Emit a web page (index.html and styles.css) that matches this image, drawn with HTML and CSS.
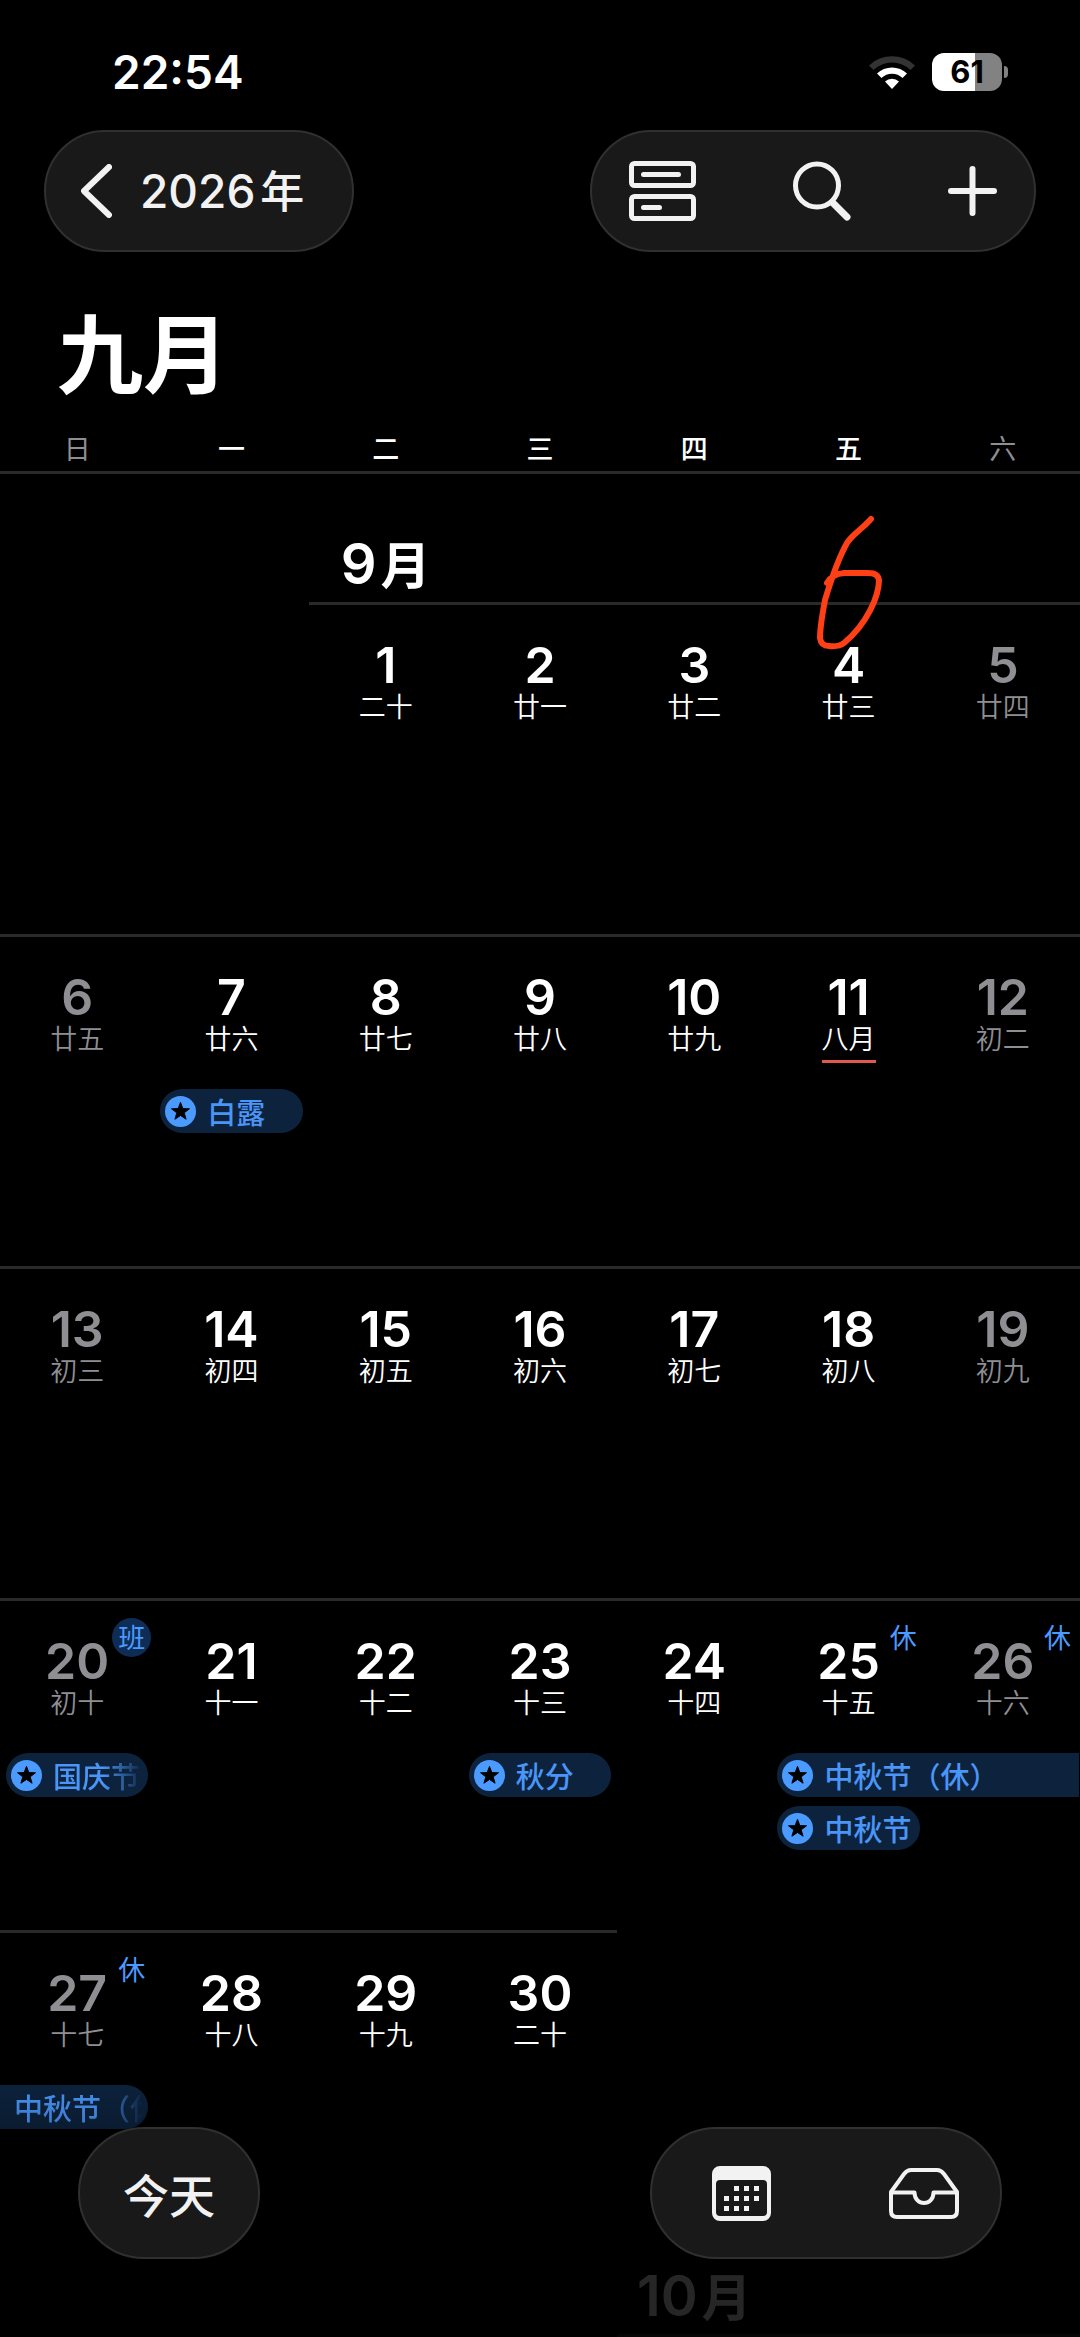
FILE: index.html
```html
<!DOCTYPE html>
<html lang="zh-CN">
	<head>
		<meta charset="utf-8">
		<meta name="viewport" content="width=device-width, initial-scale=1">
		<title>日历</title>
		<link rel="stylesheet" href="styles.css">
	</head>
	<body>
		<!-- 星形图标，事件里重复使用 -->
		<svg class="defs" aria-hidden="true">
			<symbol id="star" viewBox="0 0 32 32">
				<circle cx="16" cy="16" r="16" fill="#4a9aff"/>
				<path d="M16 6.5l2.4 6.5 6.9.2-5.5 4.2 2 6.6-5.8-3.9-5.8 3.9 2-6.6-5.5-4.2 6.9-.2z" fill="#000" stroke="#000" stroke-linejoin="round"/>
			</symbol>
		</svg>

		<header>
			<div class="status">
				<span class="time">22:54</span>
				<div class="status-icons">
					<svg width="46" height="34" viewBox="0 0 46 34">
						<path d="M0 10.500A33 33 0 0 1 46 10.500L41.500 15A26.500 26.500 0 0 0 4.500 15z" fill="#333"/>
						<path d="M8 18.500A21.500 21.500 0 0 1 38 18.500L33.500 23A15 15 0 0 0 12.500 23z" fill="#fff"/>
						<path d="M16 26.500A10 10 0 0 1 30 26.500L23 34z" fill="#fff"/>
					</svg>
					<div class="battery"><span class="level">61</span><i class="cap"></i></div>
				</div>
			</div>
			<nav class="nav">
				<button class="pill back">
					<svg width="31" height="54" viewBox="0 0 31 54"><path d="M28 3L3 27l25 24" fill="none" stroke="#f2f2f2" stroke-width="6" stroke-linecap="round" stroke-linejoin="round"/></svg>
					<span class="year">2026<span class="unit">年</span></span>
				</button>
				<div class="pill tools">
					<button aria-label="列表">
						<svg width="67" height="60" viewBox="0 0 67 60" fill="none" stroke="#f2f2f2" stroke-width="5" stroke-linecap="round">
							<rect x="2.500" y="2.500" width="62" height="22" rx="3"/>
							<rect x="2.500" y="35.500" width="62" height="22" rx="3"/>
							<path d="M14.500 13.500h35M14.500 46.500h16"/>
						</svg>
					</button>
					<button aria-label="搜索">
						<svg width="58" height="60" viewBox="0 0 58 60" fill="none" stroke="#f2f2f2" stroke-linecap="round">
							<circle cx="24" cy="24.500" r="21.500" stroke-width="5"/>
							<path d="M39.500 41.500L54 56" stroke-width="7"/>
						</svg>
					</button>
					<button aria-label="新建">
						<svg width="49" height="50" viewBox="0 0 49 50"><path d="M24.500 3v44M3 25h43" stroke="#f2f2f2" stroke-width="6" stroke-linecap="round"/></svg>
					</button>
				</div>
			</nav>
			<h1>九月</h1>
			<div class="weekdays">
				<span class="off">日</span><span>一</span><span>二</span><span>三</span><span>四</span><span>五</span><span class="off">六</span>
			</div>
		</header>

		<main>
			<div class="month first">
				<h2 class="c3">9<span class="unit">月</span></h2>
				<svg class="mark" viewBox="0 0 154 180"><path d="M100 45C88 58 82 60 76 69C67 85 60 106 54 126C51 142 49 153 49 164Q50 172 58 172Q68 173 73 169C96 150 108 122 108 106Q107 98 94 99H73Q61 100 56 109" fill="none" stroke="#ff3f16" stroke-width="6" stroke-linecap="round" stroke-linejoin="round"/></svg>
			</div>

			<div class="week">
				<hr class="from3">
				<button class="day c3"><b>1</b><span>二十</span></button>
				<button class="day c4"><b>2</b><span>廿一</span></button>
				<button class="day c5"><b>3</b><span>廿二</span></button>
				<button class="day c6"><b>4</b><span>廿三</span></button>
				<button class="day c7 off"><b>5</b><span>廿四</span></button>
			</div>

			<div class="week">
				<hr>
				<button class="day off"><b>6</b><span>廿五</span></button>
				<button class="day"><b>7</b><span>廿六</span></button>
				<button class="day"><b>8</b><span>廿七</span></button>
				<button class="day"><b>9</b><span>廿八</span></button>
				<button class="day"><b>10</b><span>廿九</span></button>
				<button class="day"><b>11</b><span class="newmonth">八月</span></button>
				<button class="day off"><b>12</b><span>初二</span></button>
				<div class="event c2"><svg><use href="#star"/></svg><span>白露</span></div>
			</div>

			<div class="week">
				<hr>
				<button class="day off"><b>13</b><span>初三</span></button>
				<button class="day"><b>14</b><span>初四</span></button>
				<button class="day"><b>15</b><span>初五</span></button>
				<button class="day"><b>16</b><span>初六</span></button>
				<button class="day"><b>17</b><span>初七</span></button>
				<button class="day"><b>18</b><span>初八</span></button>
				<button class="day off"><b>19</b><span>初九</span></button>
			</div>

			<div class="week">
				<hr>
				<button class="day off"><b>20</b><span>初十</span><em class="badge work">班</em></button>
				<button class="day"><b>21</b><span>十一</span></button>
				<button class="day"><b>22</b><span>十二</span></button>
				<button class="day"><b>23</b><span>十三</span></button>
				<button class="day"><b>24</b><span>十四</span></button>
				<button class="day"><b>25</b><span>十五</span><em class="badge">休</em></button>
				<button class="day off"><b>26</b><span>十六</span><em class="badge">休</em></button>
				<div class="event c1 cut"><svg><use href="#star"/></svg><span>国庆节</span></div>
				<div class="event c4"><svg><use href="#star"/></svg><span>秋分</span></div>
				<div class="event c6 to-next"><svg><use href="#star"/></svg><span>中秋节（休）</span></div>
				<div class="event c6 second"><svg><use href="#star"/></svg><span>中秋节</span></div>
			</div>

			<div class="week">
				<hr class="to4">
				<button class="day off"><b>27</b><span>十七</span><em class="badge">休</em></button>
				<button class="day"><b>28</b><span>十八</span></button>
				<button class="day"><b>29</b><span>十九</span></button>
				<button class="day"><b>30</b><span>二十</span></button>
				<div class="event c1 from-prev cut"><span>中秋节（休）</span></div>
			</div>

			<div class="month">
				<h2 class="c5">10<span class="unit">月</span></h2>
			</div>
			<div class="next"><hr class="from5"></div>
		</main>

		<div class="fade"></div>
		<footer class="toolbar">
			<button class="pill today">今天</button>
			<div class="pill tabs">
				<button aria-label="日历">
					<svg width="59" height="55" viewBox="0 0 59 55">
						<path fill="#f2f2f2" fill-rule="evenodd" d="M8 0h43a8 8 0 0 1 8 8v39a8 8 0 0 1-8 8H8a8 8 0 0 1-8-8V8a8 8 0 0 1 8-8zM8 14a4 4 0 0 0-4 4v28a4 4 0 0 0 4 4h43a4 4 0 0 0 4-4V18a4 4 0 0 0-4-4z"/>
						<path stroke="#f2f2f2" stroke-width="5" stroke-dasharray="5 5" d="M22 22.500h25M12 32.500h35M12 42.500h25"/>
					</svg>
				</button>
				<button aria-label="收件箱">
					<svg width="70" height="51" viewBox="0 0 70 51" fill="none" stroke="#f2f2f2" stroke-width="4" stroke-linejoin="round">
						<path d="M2 24L15 6Q18 2 22 2h26Q52 2 55 6L68 24V43q0 6-6 6H8q-6 0-6-6z"/>
						<path d="M2 24.500h23.500c0 14 19 14 19 0H68"/>
					</svg>
				</button>
			</div>
		</footer>
	</body>
</html>
```
FILE: styles.css
```css
*{
	margin: 0;
	padding: 0;
	box-sizing: border-box;
}
body{
	background: #000;
	color: #fff;
	font-family: Inter, "Noto Sans CJK SC", sans-serif;
}
button{
	background: none;
	border: none;
	color: inherit;
	font: inherit;
	cursor: pointer;
}
svg{
	display: block;
	flex: none;
}
.defs{
	position: absolute;
	width: 0;
	height: 0;
}

/* 状态栏 */
.status{
	display: flex;
	justify-content: space-between;
	align-items: center;
	height: 130px;
	padding: 13px 72px 0 112px;
}
.time{
	font-size: 46px;
	font-weight: 600;
}
.status-icons{
	display: flex;
	align-items: center;
	gap: 17px;
}
.battery{
	display: flex;
	align-items: center;
	gap: 2px;
}
.level{
	width: 70px;
	line-height: 38px;
	border-radius: 12px;
	background: linear-gradient(to right, #fff 61%, #828282 61%);
	color: #000;
	font-size: 31px;
	font-weight: 700;
	text-align: center;
}
.cap{
	width: 4px;
	height: 12px;
	border-radius: 0 6px 6px 0;
	background: #828282;
}

/* 顶部导航 */
.pill{
	display: flex;
	align-items: center;
	border: 2px solid #303030;
	border-radius: 66px;
	background: #191919;
	color: #f2f2f2;
}
.nav{
	display: flex;
	justify-content: space-between;
	padding: 0 44px;
}
.nav .pill{
	height: 122px;
}
.back{
	gap: 28px;
	padding: 0 48px 0 35px;
}
.year{
	font-size: 46px;
	font-weight: 500;
	line-height: 60px;
}
.unit{
	line-height: 1;
}
.year .unit{
	margin-left: 5px;
	font-size: 44px;
}
.tools{
	gap: 97px;
	padding: 0 37px;
}
h1{
	margin-top: 48px;
	padding-left: 57px;
	font-family: "Noto Sans CJK SC", sans-serif;
	font-size: 86px;
	font-weight: 700;
	line-height: 100px;
}
.weekdays{
	display: grid;
	grid-template-columns: repeat(7, 1fr);
	margin-top: 32px;
	padding-bottom: 7px;
	border-bottom: 3px solid #2a2a2a;
	font-family: "Noto Sans CJK SC", sans-serif;
	font-size: 27px;
	font-weight: 500;
	line-height: 32px;
	text-align: center;
}
.off{
	color: #8e8e93;
}
.weekdays .off{
	font-weight: 400;
}

/* 月份标题 */
.month, .week, .next{
	display: grid;
	grid-template-columns: repeat(7, 1fr);
}
.month{
	position: relative;
	padding: 4px 0 8px;
}
.first{
	padding-top: 60px;
}
h2{
	font-size: 56px;
	font-weight: 600;
	line-height: 60px;
	text-align: center;
}
h2 .unit{
	margin-left: 4px;
	font-size: 50px;
}
.mark{
	position: absolute;
	left: 71.4%;
	top: 0;
	width: 154px;
	height: 180px;
}

/* 每周一行 */
.week{
	grid-template-rows: 3px 152px 53px 53px;
	min-height: 332px;
}
hr{
	grid-row: 1;
	grid-column: 1 / -1;
	height: 3px;
	border: none;
	background: #2a2a2a;
}
.from3{
	grid-column: 3 / -1;
}
.from5{
	grid-column: 5 / -1;
}
.to4{
	grid-column: 1 / 5;
}
.c1{ grid-column: 1; }
.c2{ grid-column: 2; }
.c3{ grid-column: 3; }
.c4{ grid-column: 4; }
.c5{ grid-column: 5; }
.c6{ grid-column: 6; }
.c7{ grid-column: 7; }
.day{
	position: relative;
	grid-row: 2;
	display: flex;
	flex-direction: column;
	align-items: center;
	padding-top: 32px;
}
.day b{
	font-size: 50px;
	font-weight: 600;
	line-height: 56px;
}
.day span{
	font-family: "Noto Sans CJK SC", sans-serif;
	font-size: 27px;
	font-weight: 350;
	line-height: 26px;
}
.day .newmonth{
	padding-bottom: 9px;
	border-bottom: 3px solid #e0584f;
}
.badge{
	position: absolute;
	top: 17px;
	right: 3px;
	width: 39px;
	height: 39px;
	border-radius: 50%;
	color: #4a9aff;
	font-family: "Noto Sans CJK SC", sans-serif;
	font-size: 27px;
	font-style: normal;
	line-height: 38px;
	text-align: center;
}
.work{
	background: #0e2c54;
}

/* 事件 */
.event{
	grid-row: 3;
	display: flex;
	align-items: center;
	gap: 11px;
	height: 44px;
	margin: 0 6px;
	padding: 0 5px;
	border-radius: 22px;
	background: #0d233d;
	color: #4a95f8;
	font-family: "Noto Sans CJK SC", sans-serif;
	font-size: 29px;
	font-weight: 500;
	line-height: 44px;
	white-space: nowrap;
	overflow: hidden;
}
.event svg{
	width: 31px;
	height: 31px;
}
.event span{
	flex: 1;
	overflow: hidden;
}
.cut span{
	-webkit-mask-image: linear-gradient(to right, #000 calc(100% - 40px), transparent);
	mask-image: linear-gradient(to right, #000 calc(100% - 40px), transparent);
}
.second{
	grid-row: 4;
}
.to-next{
	grid-column: 6 / 8;
	margin-right: 1px;
	border-radius: 22px 0 0 22px;
}
.from-prev{
	margin-left: 0;
	padding-left: 14px;
	border-radius: 0 22px 22px 0;
}

/* 底部工具栏 */
.fade{
	position: fixed;
	left: 0;
	right: 0;
	bottom: 0;
	height: 260px;
	background: linear-gradient(to bottom, rgba(0,0,0,0), rgba(0,0,0,0.15) 40px, rgba(0,0,0,0.85) 200px);
	pointer-events: none;
}
.toolbar{
	position: fixed;
	left: 78px;
	right: 78px;
	bottom: 78px;
	display: flex;
	justify-content: space-between;
}
.toolbar .pill{
	height: 132px;
}
.today{
	padding: 0 43px;
	font-family: "Noto Sans CJK SC", sans-serif;
	font-size: 46px;
	font-weight: 500;
	line-height: 60px;
}
.tabs{
	gap: 118px;
	padding: 0 41px 0 60px;
}
```
